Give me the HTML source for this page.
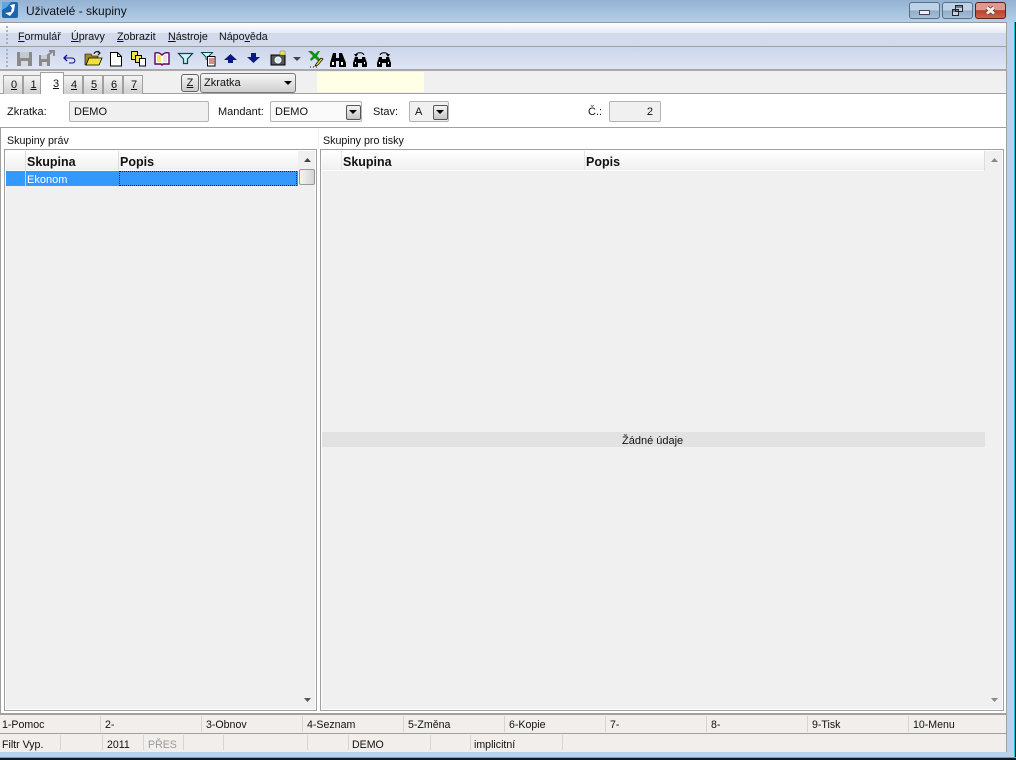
<!DOCTYPE html>
<html><head><meta charset="utf-8">
<style>
html,body{margin:0;padding:0}
body{width:1016px;height:760px;position:relative;overflow:hidden;background:#b9d1ea;font-family:"Liberation Sans",sans-serif;font-size:11px;color:#111}
.a{position:absolute;box-sizing:border-box}
.t{position:absolute;white-space:nowrap;line-height:14px}
.m{font-size:10.7px}
.f{font-size:10.6px}
u{text-decoration:underline}
.tab{position:absolute;top:75px;height:19px;width:20px;border:1px solid #a0a0a0;border-bottom:none;background:linear-gradient(#f4f4f4,#cfcfcf);text-align:center;line-height:19px;font-size:11px;box-sizing:border-box;padding-left:2px}
.fld{position:absolute;top:101px;height:21px;background:#f0f0f0;border:1px solid #b4b4b4;border-radius:2px;box-sizing:border-box;line-height:20px;padding-left:4px}
.drop{position:absolute;width:15px;height:15px;background:linear-gradient(#f4f4f4,#c4c4c4);border:1px solid #555;border-radius:2px;box-sizing:border-box}
.drop:after{content:"";position:absolute;left:2px;top:4px;border-left:4px solid transparent;border-right:4px solid transparent;border-top:4px solid #000}
.sep{position:absolute;width:1px;background:#d8d4d0}
svg{position:absolute;overflow:visible}
</style></head><body>
<div class="a" style="left:0;top:0;width:1016px;height:23px;background:linear-gradient(#93b2d1,#b5d0ea)"></div>
<div class="a" style="left:1014px;top:22px;width:2px;height:738px;background:#0a1a20;border-left:1px solid #10c8e0"></div>
<div class="a" style="left:0;top:757px;width:1016px;height:3px;background:#0a1a20;border-top:1px solid #10c8e0"></div>

<svg style="left:2px;top:2px" width="16" height="16" viewBox="0 0 16 16"><rect width="16" height="16" rx="2" fill="#1d66ac"/><path d="M0 0h9L5 5 0 8z" fill="#5aa8e4"/><path d="M8 3l5-1-1 7-4 5-5-3 6-1 1-4z" fill="#fff"/></svg>
<div class="t" style="left:26px;top:4px;font-size:12px;color:#111">Uživatelé - skupiny</div>

<div class="a" style="left:909px;top:2px;width:31px;height:17px;border:1px solid #5a6e84;border-radius:3px;background:linear-gradient(#bcd2e6 0 50%,#8fabc6 50%,#a4bfd8)"></div>
<div class="a" style="left:919px;top:10px;width:11px;height:5px;background:#eef;border:1px solid #445"></div>
<div class="a" style="left:942px;top:2px;width:31px;height:17px;border:1px solid #5a6e84;border-radius:3px;background:linear-gradient(#bcd2e6 0 50%,#8fabc6 50%,#a4bfd8)"></div>
<svg style="left:951px;top:5px" width="13" height="12"><path d="M4.500.5h7v6h-7z M1.500 4.500h6v6h-6z" fill="#c4d6e6" stroke="#223"/><path d="M1.500 6h6M4.500 2h7" stroke="#223"/></svg>
<div class="a" style="left:975px;top:2px;width:31px;height:17px;border:1px solid #5c2020;border-radius:3px;background:linear-gradient(#dd9a8c 0 45%,#b8402c 50%,#c8654e)"></div>
<svg style="left:985px;top:6px" width="12" height="10"><path d="M2 1.500l7 6M9 1.500l-7 6" stroke="#5c3028" stroke-width="4.200" fill="none"/><path d="M2 1.500l7 6M9 1.500l-7 6" stroke="#f2eeea" stroke-width="2.800" fill="none"/></svg>

<div class="a" style="left:0;top:22px;width:1007px;height:730px;background:#f0f0f0;border-right:1px solid #a0a0a0"></div>
<div class="a" style="left:0;top:22px;width:1007px;height:1px;background:#999"></div>
<div class="a" style="left:0;top:23px;width:1006px;height:23px;background:linear-gradient(#fff,#e6eaf5 43%,#d3daec 44%,#d3daec)"></div>
<div class="a" style="left:0;top:46px;width:1007px;height:1px;background:#a0a0a0"></div>
<div class="a" style="left:0;top:47px;width:1006px;height:23px;background:linear-gradient(#ccd5eb,#e0e6f5)"></div>
<div class="a" style="left:0;top:69px;width:1007px;height:2px;background:#a8a8a8"></div>
<div class="a" style="left:6px;top:26px;width:2px;height:18px;background:repeating-linear-gradient(#a9b0c4 0 2px,transparent 2px 4px)"></div>
<div class="a" style="left:6px;top:49px;width:2px;height:18px;background:repeating-linear-gradient(#a9b0c4 0 2px,transparent 2px 4px)"></div>

<div class="t m" style="left:18px;top:30px"><u>F</u>ormulář</div>
<div class="t m" style="left:71px;top:30px"><u>Ú</u>pravy</div>
<div class="t m" style="left:117px;top:30px"><u>Z</u>obrazit</div>
<div class="t m" style="left:168px;top:30px"><u>N</u>ástroje</div>
<div class="t m" style="left:219px;top:30px">Nápo<u>v</u>ěda</div>

<svg style="left:17px;top:52px" width="15" height="14"><path d="M0 0h15v14H0z" fill="#8a8a8a"/><path d="M3 0h9v6H3z" fill="#c4c8d0"/><path d="M4 9h7v5H4z" fill="#d8dbe2"/></svg>
<svg style="left:39px;top:50px" width="17" height="16"><path d="M0 5h11v11H0z" fill="#8a8a8a"/><path d="M2 5h6v4H2z" fill="#c8ccd4"/><path d="M3 12h5v4H3z" fill="#d8dbe2"/><path d="M8 6l6-5M10 1h5v5" stroke="#8a8a8a" stroke-width="2" fill="none"/></svg>
<svg style="left:63px;top:54px" width="14" height="10"><path d="M4 1L1 4l3 3" stroke="#10108a" stroke-width="1.300" fill="none"/><path d="M1 4h7c5 0 5 5 1 5H6" stroke="#10108a" fill="none"/></svg>
<svg style="left:85px;top:51px" width="17" height="15"><path d="M0 3h6l1 2h6v3H4L1 14H0z" fill="#a08a20" stroke="#000" stroke-width=".6"/><path d="M4 7h13l-3 7H1z" fill="#f0e040" stroke="#000" stroke-width=".8"/><path d="M9 3c1-3 4-3 6-1M13 0l2 2-2 2" stroke="#000" fill="none"/></svg>
<svg style="left:110px;top:52px" width="12" height="15"><path d="M.5.5h7l4 4v9.500H.5z" fill="#fff" stroke="#000"/><path d="M7.500.5v4h4" fill="none" stroke="#000"/></svg>
<svg style="left:131px;top:51px" width="16" height="16"><path d="M.5.5h6v8h-6z" fill="#f4e050" stroke="#000"/><path d="M4.500 4.500h6v7h-6z" fill="#f4e050" stroke="#000"/><path d="M8.500 7.500h6v7.500h-6z" fill="#fff" stroke="#000"/></svg>
<svg style="left:154px;top:52px" width="16" height="14"><path d="M1 1c3-1 5 0 7 2 2-2 4-3 7-2v11H9l-1 1-1-1H1z" fill="#fff" stroke="#600060" stroke-width="1.400"/><path d="M3 3h4v7H3z" fill="#f4e860"/><path d="M9 3h4v7H9z" fill="#e8e0f0"/></svg>
<svg style="left:178px;top:53px" width="15" height="11"><path d="M.5.500h14L9.500 6v4.500h-4V6z" fill="#d0f4f0" stroke="#0a4850" stroke-width="1.200"/></svg>
<svg style="left:201px;top:52px" width="15" height="15"><path d="M.5.500h11L7 5v3L5 7V5z" fill="#d0f4f0" stroke="#0a4850"/><path d="M6.500 4.500h7.500v9.500H6.500z" fill="#fff" stroke="#000"/><path d="M8 7h5M8 9h5M8 11h5" stroke="#c01010"/></svg>
<svg style="left:224px;top:54px" width="13" height="10"><path d="M6.500 0L13 6H9v3H4V6H0z" fill="#0a1a80"/></svg>
<svg style="left:247px;top:53px" width="13" height="10"><path d="M6.500 10L13 4H9V0H4v4H0z" fill="#0a1a80"/></svg>
<svg style="left:271px;top:51px" width="15" height="15"><rect x="0" y="4" width="14" height="10" fill="#555" stroke="#000"/><circle cx="7" cy="9" r="3" fill="#cfe8f8" stroke="#fff"/><path d="M9 0h5v4H9z" fill="#f4e840" stroke="#777" stroke-width=".5"/></svg>
<svg style="left:293px;top:57px" width="8" height="4"><path d="M0 0h8L4 4z" fill="#444"/></svg>
<svg style="left:308px;top:51px" width="16" height="17"><path d="M0 0h4l3 3 3-3h2L9 5l3 3-2 2-3-3-4 3-1-2 3-3z" fill="#109010"/><path d="M8 13l5-6 2 1-5 6-3 1z" fill="#f4d840" stroke="#000" stroke-width=".7"/><path d="M2 16h1M5 16h1M8 16h1" stroke="#000"/></svg>
<svg style="left:330px;top:53px" width="16" height="14"><path d="M3 0h3v5h3V0h3l4 10v4H9V8H6v6H0v-4z" fill="#000"/><path d="M2 9h2v3H2zM11 9h2v3h-2z" fill="#fff"/></svg>
<svg style="left:353px;top:52px" width="14" height="15"><path d="M2 5h3v2h4V5h3l2 6v4H9v-4H5v4H0v-4z" fill="#000"/><path d="M2 10h1v2H2zM11 10h1v2h-1z" fill="#fff"/><path d="M3 3c1-3 7-3 8 0" fill="none" stroke="#000"/><path d="M1 2h4L3 5z" fill="#000"/></svg>
<svg style="left:377px;top:52px" width="14" height="15"><path d="M2 5h3v2h4V5h3l2 6v4H9v-4H5v4H0v-4z" fill="#000"/><path d="M2 10h1v2H2zM11 10h1v2h-1z" fill="#fff"/><path d="M3 3c1-3 7-3 8 0" fill="none" stroke="#000"/><path d="M9 2h4l-2 3z" fill="#000"/></svg>

<div class="a" style="left:0;top:93px;width:1007px;height:1px;background:#a0a0a0"></div>
<div class="tab" style="left:3px"><u>0</u></div>
<div class="tab" style="left:23px;width:18px;padding-left:3px"><u>1</u></div>
<div class="tab" style="left:63px"><u>4</u></div>
<div class="tab" style="left:83px"><u>5</u></div>
<div class="tab" style="left:103px"><u>6</u></div>
<div class="tab" style="left:123px"><u>7</u></div>
<div class="a" style="left:40px;top:72px;width:24px;height:23px;background:#fff;border:1px solid #a0a0a0;border-bottom:none;text-align:center;line-height:22px;padding-left:8px"><u>3</u></div>

<div class="a" style="left:181px;top:74px;width:18px;height:18px;border:1px solid #666;border-radius:3px;background:linear-gradient(#f6f6f6,#ccc);text-align:center;line-height:16px"><u>Z</u></div>
<div class="a" style="left:200px;top:73px;width:96px;height:20px;border:1px solid #777;border-radius:3px;background:linear-gradient(#f6f6f6,#cfcfcf);line-height:19px;padding-left:3px;font-size:11px">Zkratka</div>
<svg style="left:284px;top:81px" width="8" height="4"><path d="M0 0h8L4 4z" fill="#000"/></svg>
<div class="a" style="left:317px;top:72px;width:107px;height:20px;background:#ffffe6;border-radius:2px"></div>

<div class="a" style="left:0;top:94px;width:1006px;height:33px;background:#fff"></div>
<div class="a" style="left:41px;top:92px;width:22px;height:3px;background:#fff"></div>
<div class="t" style="left:7px;top:105px">Zkratka:</div>
<div class="fld" style="left:69px;width:140px">DEMO</div>
<div class="t" style="left:218px;top:105px">Mandant:</div>
<div class="fld" style="left:270px;width:92px;background:#fafafa">DEMO</div>
<div class="drop" style="left:346px;top:105px"></div>
<div class="t" style="left:373px;top:105px">Stav:</div>
<div class="fld" style="left:409px;width:40px;padding-left:5px">A</div>
<div class="drop" style="left:433px;top:105px"></div>
<div class="t" style="left:588px;top:105px">Č.:</div>
<div class="fld" style="left:609px;width:52px;text-align:right;padding-right:7px">2</div>
<div class="a" style="left:0;top:127px;width:1007px;height:1px;background:#a0a0a0"></div>

<div class="a" style="left:0;top:128px;width:1006px;height:586px;background:#fff"></div>
<div class="a" style="left:0;top:128px;width:1px;height:586px;background:#a0a0a0"></div>
<div class="a" style="left:318px;top:128px;width:1px;height:21px;background:#f0f0f0"></div>
<div class="t" style="left:7px;top:134px;font-size:10.700px">Skupiny práv</div>
<div class="t" style="left:323px;top:134px;font-size:10.700px">Skupiny pro tisky</div>

<div class="a" style="left:4px;top:149px;width:313px;height:562px;border:1px solid #a0a0a0;box-shadow:inset 0 0 0 1px #fff;background:#f0f0f0"></div>
<div class="a" style="left:6px;top:151px;width:292px;height:19px;background:linear-gradient(#fff,#f0f0f0)"></div>
<div class="a" style="left:6px;top:170px;width:292px;height:1px;background:#fff"></div>
<div class="t" style="left:27px;top:155px;font-size:12.500px;font-weight:bold">Skupina</div>
<div class="t" style="left:120px;top:155px;font-size:12.500px;font-weight:bold">Popis</div>
<div class="sep" style="left:25px;top:151px;height:35px;background:#dcdcdc"></div>
<div class="sep" style="left:118px;top:151px;height:19px;background:#dcdcdc"></div>
<div class="a" style="left:6px;top:171px;width:292px;height:15px;background:#3399ff"></div>
<div class="sep" style="left:25px;top:171px;height:15px;background:#b8d4f0"></div>
<div class="a" style="left:119px;top:171px;width:178px;height:15px;border:1px dotted #30200a;background:#3399ff"></div>
<div class="t" style="left:27px;top:173px;color:#fff">Ekonom</div>
<div class="a" style="left:298px;top:151px;width:17px;height:558px;background:#f0f0f0"></div>
<svg style="left:304px;top:158px" width="7" height="4"><path d="M0 4h7L3.500 0z" fill="#444"/></svg>
<div class="a" style="left:299px;top:169px;width:16px;height:16px;background:linear-gradient(90deg,#f4f4f4,#d4d4d4);border:1px solid #999;border-radius:2px"></div>
<svg style="left:304px;top:698px" width="7" height="4"><path d="M0 0h7L3.500 4z" fill="#555"/></svg>

<div class="a" style="left:320px;top:149px;width:684px;height:562px;border:1px solid #a0a0a0;box-shadow:inset 0 0 0 1px #fff;background:#f0f0f0"></div>
<div class="a" style="left:322px;top:151px;width:662px;height:19px;background:linear-gradient(#fff,#f0f0f0)"></div>
<div class="a" style="left:322px;top:170px;width:662px;height:1px;background:#fff"></div>
<div class="sep" style="left:984px;top:151px;height:20px;background:#ddd"></div>
<div class="t" style="left:343px;top:155px;font-size:12.500px;font-weight:bold">Skupina</div>
<div class="t" style="left:586px;top:155px;font-size:12.500px;font-weight:bold">Popis</div>
<div class="sep" style="left:341px;top:151px;height:19px;background:#e4e4e4"></div>
<div class="sep" style="left:584px;top:151px;height:19px;background:#e4e4e4"></div>
<svg style="left:991px;top:158px" width="7" height="4"><path d="M0 4h7L3.500 0z" fill="#888"/></svg>
<svg style="left:991px;top:698px" width="7" height="4"><path d="M0 0h7L3.500 4z" fill="#888"/></svg>
<div class="a" style="left:322px;top:432px;width:663px;height:15px;background:#e2e2e2"></div>
<div class="t" style="left:622px;top:434px;font-size:11px">Žádné údaje</div>

<div class="a" style="left:0;top:713px;width:1007px;height:2px;background:#a0a0a0"></div>
<div class="a" style="left:0;top:715px;width:1006px;height:18px;background:#f1eeec"></div>
<div class="a" style="left:0;top:733px;width:1007px;height:1px;background:#a0a0a0"></div>
<div class="a" style="left:0;top:734px;width:1006px;height:17px;background:#f1eeec"></div>
<div class="t f" style="left:2px;top:718px">1-Pomoc</div>
<div class="t f" style="left:105px;top:718px">2-</div>
<div class="t f" style="left:206px;top:718px">3-Obnov</div>
<div class="t f" style="left:307px;top:718px">4-Seznam</div>
<div class="t f" style="left:408px;top:718px">5-Změna</div>
<div class="t f" style="left:509px;top:718px">6-Kopie</div>
<div class="t f" style="left:610px;top:718px">7-</div>
<div class="t f" style="left:711px;top:718px">8-</div>
<div class="t f" style="left:812px;top:718px">9-Tisk</div>
<div class="t f" style="left:913px;top:718px">10-Menu</div>
<div class="sep" style="left:100px;top:716px;height:16px"></div>
<div class="sep" style="left:201px;top:716px;height:16px"></div>
<div class="sep" style="left:302px;top:716px;height:16px"></div>
<div class="sep" style="left:403px;top:716px;height:16px"></div>
<div class="sep" style="left:504px;top:716px;height:16px"></div>
<div class="sep" style="left:605px;top:716px;height:16px"></div>
<div class="sep" style="left:706px;top:716px;height:16px"></div>
<div class="sep" style="left:807px;top:716px;height:16px"></div>
<div class="sep" style="left:908px;top:716px;height:16px"></div>

<div class="t f" style="left:2px;top:738px">Filtr Vyp.</div>
<div class="t f" style="left:107px;top:738px">2011</div>
<div class="t f" style="left:148px;top:738px;color:#9a9a9a">PŘES</div>
<div class="t f" style="left:352px;top:738px">DEMO</div>
<div class="t f" style="left:474px;top:738px">implicitní</div>
<div class="sep" style="left:60px;top:735px;height:15px"></div>
<div class="sep" style="left:102px;top:735px;height:15px"></div>
<div class="sep" style="left:143px;top:735px;height:15px"></div>
<div class="sep" style="left:183px;top:735px;height:15px"></div>
<div class="sep" style="left:223px;top:735px;height:15px"></div>
<div class="sep" style="left:307px;top:735px;height:15px"></div>
<div class="sep" style="left:348px;top:735px;height:15px"></div>
<div class="sep" style="left:430px;top:735px;height:15px"></div>
<div class="sep" style="left:470px;top:735px;height:15px"></div>
<div class="sep" style="left:562px;top:735px;height:15px"></div>
</body></html>
